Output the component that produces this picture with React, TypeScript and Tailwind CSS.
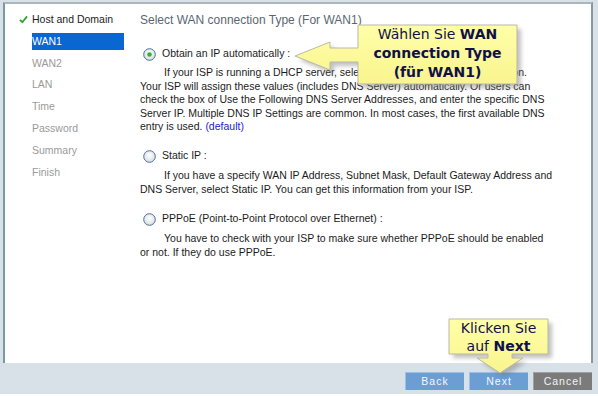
import React from "react";

function Radio({ checked }: { checked?: boolean }) {
  return (
    <svg width="13" height="13" viewBox="0 0 13 13" className="shrink-0">
      <defs>
        <radialGradient id={checked ? "rg1" : "rg0"} cx="0.5" cy="0.4" r="0.6">
          <stop offset="0" stopColor="#ffffff" />
          <stop offset="1" stopColor="#d6dde4" />
        </radialGradient>
      </defs>
      <circle cx="6.5" cy="6.5" r="5.8" fill={`url(#${checked ? "rg1" : "rg0"})`} stroke="#4f6e8e" strokeWidth="1" />
      {checked && <circle cx="6.5" cy="6.5" r="2.3" fill="#2fb52f" />}
    </svg>
  );
}

function Check() {
  return (
    <svg width="9" height="9" viewBox="0 0 9 9">
      <path d="M1 4.8 L3.4 7.2 L8 1.4" fill="none" stroke="#2ea02e" strokeWidth="1.8" />
    </svg>
  );
}

const items = ["WAN1", "WAN2", "LAN", "Time", "Password", "Summary", "Finish"];

export default function App() {
  return (
    <div className="relative w-[598px] h-[396px] bg-white overflow-hidden font-['Liberation_Sans',Arial,sans-serif] text-[10.5px] text-[#1b1b1b]">
      <div className="h-[394px] bg-[#d9e1e8] flex flex-col pt-[2px]">
        <div className="ml-[3px] w-[590px] h-[361px] bg-white border-t-2 border-l-2 border-r-2 border-t-[#a9b7be] border-l-[#7b98a3] border-r-[#8798a0] flex">
          {/* sidebar */}
          <div className="w-[135px] pt-[5px] pl-[14px] flex flex-col">
            <div className="h-[21.8px] flex items-center">
              <span className="w-[13px] flex items-center">
                <Check />
              </span>
              <span className="text-[#222]">Host and Domain</span>
            </div>
            {items.map((it, i) => (
              <div key={it} className="h-[21.8px] flex items-center pl-[13px]">
                {i === 0 ? (
                  <div className="h-[17px] w-[92px] bg-[#0a66d0] text-white flex items-center">{it}</div>
                ) : (
                  <span className="text-[#9a9a9a]">{it}</span>
                )}
              </div>
            ))}
          </div>
          {/* main */}
          <div className="flex-1 flex flex-col pt-[8px]">
            <div className="h-[16px] leading-[16px] text-[12px] text-[#5b6770]">
              Select WAN connection Type (For WAN1)
            </div>
            <div className="mt-[18px] h-[16px] flex items-center gap-[6px] ml-[3px]">
              <Radio checked />
              <span>Obtain an IP automatically :</span>
            </div>
            <div className="mt-[4px] leading-[13.5px] whitespace-nowrap">
              <div className="pl-[24px]">If your ISP is running a DHCP server, select Obtain an IP automatically option.</div>
              <div>Your ISP will assign these values (includes DNS Server) automatically. Or users can</div>
              <div>check the box of Use the Following DNS Server Addresses, and enter the specific DNS</div>
              <div>Server IP. Multiple DNS IP Settings are common. In most cases, the first available DNS</div>
              <div>
                entry is used. <span className="text-[#1a1acc]">(default)</span>
              </div>
            </div>
            <div className="mt-[14.5px] h-[16px] flex items-center gap-[6px] ml-[3px]">
              <Radio />
              <span>Static IP :</span>
            </div>
            <div className="mt-[5px] leading-[13.5px] whitespace-nowrap">
              <div className="pl-[24px]">If you have a specify WAN IP Address, Subnet Mask, Default Gateway Address and</div>
              <div>DNS Server, select Static IP. You can get this information from your ISP.</div>
            </div>
            <div className="mt-[15px] h-[16px] flex items-center gap-[6px] ml-[3px]">
              <Radio />
              <span>PPPoE (Point-to-Point Protocol over Ethernet) :</span>
            </div>
            <div className="mt-[5px] leading-[13.5px] whitespace-nowrap">
              <div className="pl-[24px]">You have to check with your ISP to make sure whether PPPoE should be enabled</div>
              <div>or not. If they do use PPPoE.</div>
            </div>
          </div>
        </div>
        {/* buttons */}
        <div className="flex-1 flex justify-end items-start pt-[9px] pr-[6px] gap-[5px] text-[10.5px]">
          <div className="w-[59px] h-[18px] bg-[#6c9dd3] border-t border-l border-[#9dc0e6] text-[#f4f8fc] flex items-center justify-center tracking-[1px]">Back</div>
          <div className="w-[59px] h-[18px] bg-[#6c9dd3] border-t border-l border-[#9dc0e6] text-[#f4f8fc] flex items-center justify-center tracking-[1px]">Next</div>
          <div className="w-[59px] h-[18px] bg-[#7b7b7b] border-t border-l border-[#a0a0a0] text-[#f4f4f4] flex items-center justify-center tracking-[1px]">Cancel</div>
        </div>
      </div>

      {/* callouts */}
      <svg className="absolute left-0 top-0 pointer-events-none" width="598" height="396" viewBox="0 0 598 396">
        <defs>
          <filter id="blur" x="-20%" y="-20%" width="140%" height="140%">
            <feGaussianBlur stdDeviation="2" />
          </filter>
          <linearGradient id="yel" x1="0" y1="0" x2="0" y2="1">
            <stop offset="0" stopColor="#ffffa8" />
            <stop offset="1" stopColor="#f9f48e" />
          </linearGradient>
        </defs>
        <g transform="translate(4,4)" filter="url(#blur)" opacity="0.45">
          <path d="M358 25 H517 V84 H358 V62 H330 V70 L295 56 L330 42 V48 H358 Z" fill="#777" />
          <path d="M449 319 H548 V354 H512 V358 H523 L500 373 L477 358 H488 V354 H449 Z" fill="#777" />
        </g>
        <path d="M358 25 H517 V84 H358 V62 H330 V70 L295 56 L330 42 V48 H358 Z" fill="url(#yel)" stroke="#b9b9a8" strokeWidth="1" />
        <path d="M449 319 H548 V354 H512 V358 H523 L500 373 L477 358 H488 V354 H449 Z" fill="url(#yel)" stroke="#b9b9a8" strokeWidth="1" />
      </svg>
      <div className="absolute left-[358px] top-[24px] w-[159px] h-[58px] flex flex-col items-center justify-center font-['DejaVu_Sans',Verdana,sans-serif] text-[14px] leading-[19px] text-[#10104a]">
        <div>
          Wählen Sie <b>WAN</b>
        </div>
        <div className="font-bold">connection Type</div>
        <div className="font-bold">(für WAN1)</div>
      </div>
      <div className="absolute left-[449px] top-[319px] w-[99px] h-[35px] flex flex-col items-center justify-center font-['DejaVu_Sans',Verdana,sans-serif] text-[14px] leading-[18px] text-[#10104a]">
        <div>Klicken Sie</div>
        <div>
          auf <b>Next</b>
        </div>
      </div>
    </div>
  );
}
